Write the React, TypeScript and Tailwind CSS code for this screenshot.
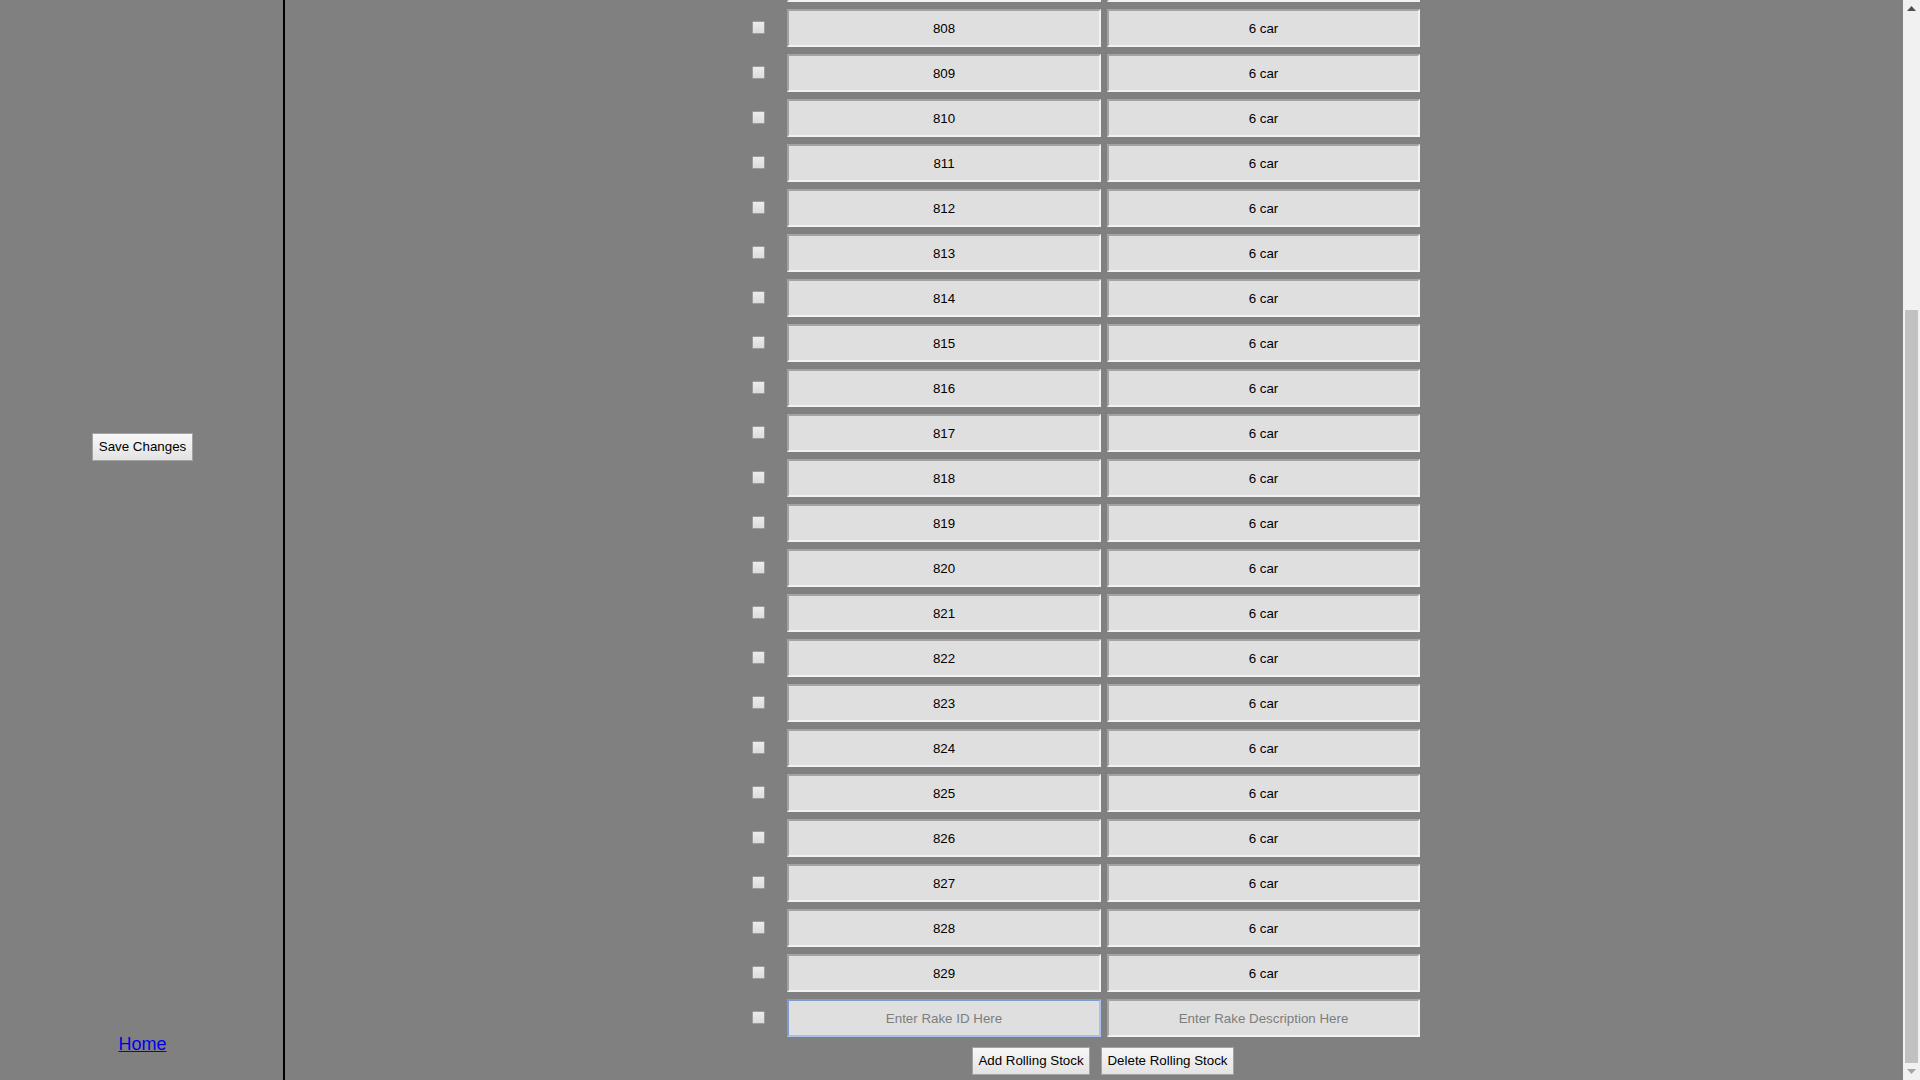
import React from "react";

const ids: number[] = [];
for (let i = 795; i <= 829; i++) ids.push(i);

function Row({ id }: { id: number }) {
  return (
    <div className="flex shrink-0 items-start h-[38px]">
      <input
        type="checkbox"
        className="appearance-none mt-[12px] w-[13px] h-[13px] border border-[#9c9c9c] bg-gradient-to-b from-[#ececec] to-[#dcdcdc] rounded-[1px] m-0"
      />
      <input
        type="text"
        readOnly
        defaultValue={String(id)}
        className="ml-[22px] w-[314px] h-[38px] border-2 border-t-[#a3a3a3] border-l-[#a3a3a3] border-b-[#f2f2f2] border-r-[#f2f2f2] bg-[#dfdfdf] text-center text-[13.33px] text-black outline-none"
      />
      <input
        type="text"
        readOnly
        defaultValue="6 car"
        className="ml-[6px] w-[313px] h-[38px] border-2 border-t-[#a3a3a3] border-l-[#a3a3a3] border-b-[#f2f2f2] border-r-[#f2f2f2] bg-[#dfdfdf] text-center text-[13.33px] text-black outline-none"
      />
    </div>
  );
}

export default function App() {
  return (
    <div
      className="flex h-[1080px] w-[1920px] overflow-hidden bg-[#808080]"
      style={{ fontFamily: '"Liberation Sans", Arial, sans-serif' }}
    >
      {/* Left panel */}
      <div className="flex w-[285px] shrink-0 flex-col items-center border-r-2 border-black">
        <div className="pt-[433px]">
          <button className="w-[101px] h-[28px] border border-[#a3a3a3] bg-gradient-to-b from-[#f7f7f7] to-[#e3e3e3] text-[13.33px] text-black ml-[2px]">
            Save Changes
          </button>
        </div>
        <div className="flex-1" />
        <a
          href="#"
          className="pb-[26px] text-[18px] leading-[20px] text-[#0000ee] underline ml-[2px]"
        >
          Home
        </a>
      </div>

      {/* Main content */}
      <div className="flex flex-1 flex-col justify-end overflow-hidden pb-[5px]">
        <div className="flex shrink-0 flex-col gap-[7px] pl-[467px]">
          {ids.map((id) => (
            <Row key={id} id={id} />
          ))}
          <div className="flex shrink-0 items-start h-[38px]">
            <input
              type="checkbox"
              className="appearance-none mt-[12px] w-[13px] h-[13px] border border-[#9c9c9c] bg-gradient-to-b from-[#ececec] to-[#dcdcdc] rounded-[1px] m-0"
            />
            <input
              type="text"
              placeholder="Enter Rake ID Here"
              className="ml-[22px] w-[314px] h-[38px] border-2 border-t-[#7f9ccf] border-l-[#7f9ccf] border-b-[#a9c1ea] border-r-[#a9c1ea] bg-[#dfdfdf] text-center text-[13.33px] text-black placeholder:text-[#7d7d7d] outline-none"
            />
            <input
              type="text"
              placeholder="Enter Rake Description Here"
              className="ml-[6px] w-[313px] h-[38px] border-2 border-t-[#a3a3a3] border-l-[#a3a3a3] border-b-[#f2f2f2] border-r-[#f2f2f2] bg-[#dfdfdf] text-center text-[13.33px] text-black placeholder:text-[#7d7d7d] outline-none"
            />
          </div>
        </div>
        <div className="mt-[10px] flex shrink-0 gap-[11px] pl-[687px]">
          <button className="w-[118px] h-[28px] border border-[#a3a3a3] bg-gradient-to-b from-[#f7f7f7] to-[#e3e3e3] text-[13.33px] text-black">
            Add Rolling Stock
          </button>
          <button className="w-[133px] h-[28px] border border-[#a3a3a3] bg-gradient-to-b from-[#f7f7f7] to-[#e3e3e3] text-[13.33px] text-black">
            Delete Rolling Stock
          </button>
        </div>
      </div>

      {/* Scrollbar drawing */}
      <div className="flex w-[17px] shrink-0 flex-col bg-[#f1f1f1]">
        <div className="flex h-[17px] shrink-0 items-center justify-center">
          <svg width="9" height="5" viewBox="0 0 9 5">
            <polygon points="4.5,0 9,5 0,5" fill="#505050" />
          </svg>
        </div>
        <div className="flex flex-1 flex-col justify-end px-[2px]">
          <div className="h-[753px] w-full bg-[#c1c1c1]" />
        </div>
        <div className="flex h-[17px] shrink-0 items-center justify-center">
          <svg width="9" height="5" viewBox="0 0 9 5">
            <polygon points="0,0 9,0 4.5,5" fill="#a3a3a3" />
          </svg>
        </div>
      </div>
    </div>
  );
}
